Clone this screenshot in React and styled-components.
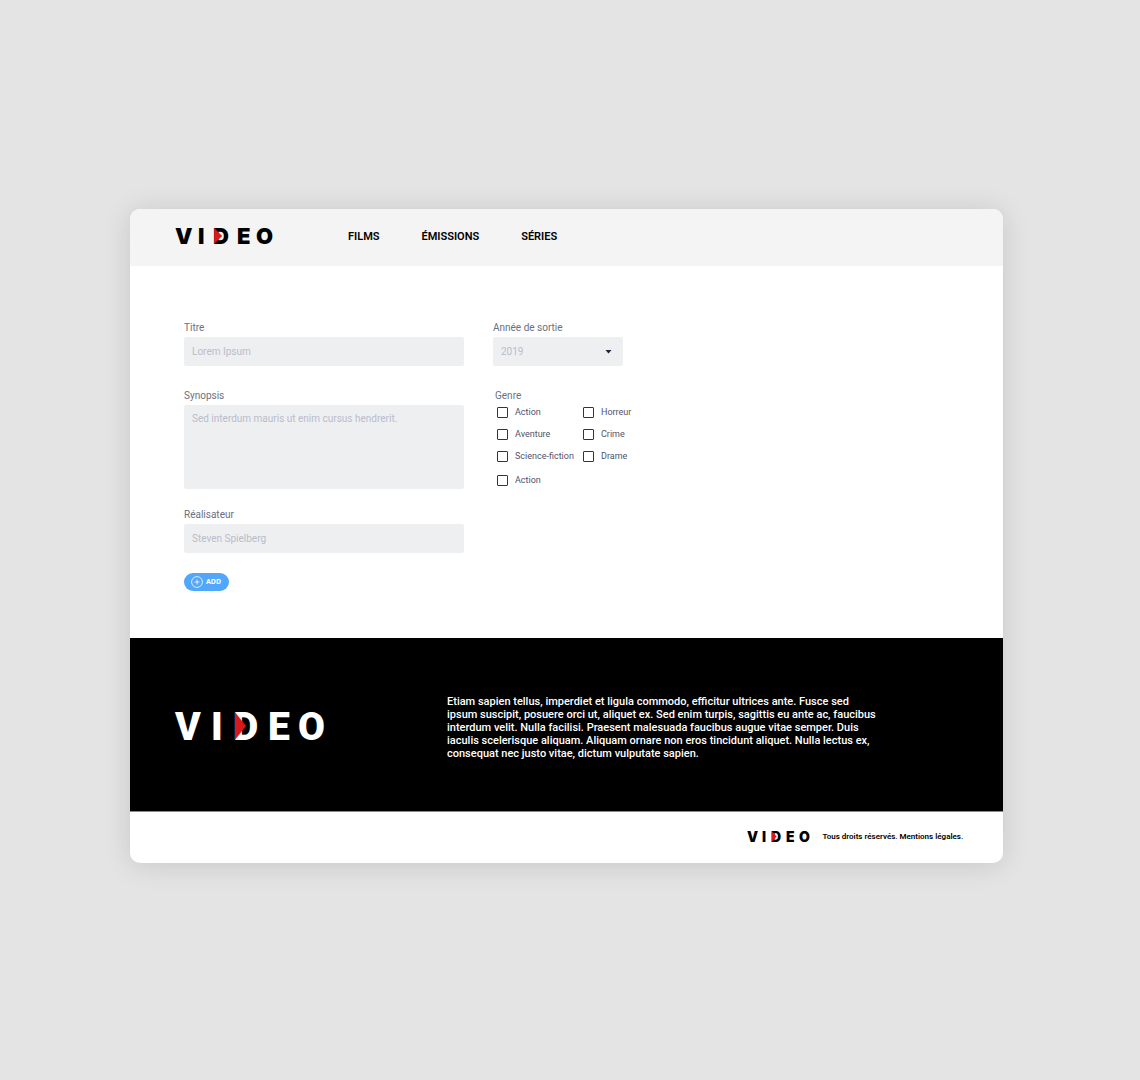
import React from "react";
import styled, { createGlobalStyle } from "styled-components";

const Global = createGlobalStyle`
  *, *::before, *::after { box-sizing: border-box; }
  body {
    margin: 0;
    background: #e4e4e4;
    font-family: Roboto, "Liberation Sans", sans-serif;
    color: #000;
  }
`;

const Page = styled.div`
  display: grid;
  align-items: center;
  min-height: 100vh;
  padding: 209px 12% 217px 130px;
`;

const Window = styled.div`
  min-width: 0;
  background: #fff;
  border-radius: 10px;
  overflow: hidden;
  box-shadow: 0 2px 28px rgba(0, 0, 0, 0.13);
`;

const Header = styled.header`
  display: flex;
  align-items: center;
  gap: 74px;
  min-height: 57px;
  padding: 0 45px 3px;
  background: #f4f4f4;
`;

const Nav = styled.nav`
  display: flex;
  flex-wrap: wrap;
  gap: 42px;
  padding-top: 1px;
`;

const NavLink = styled.a`
  color: #000;
  font-size: 11px;
  font-weight: 600;
  line-height: 16px;
  text-decoration: none;
`;

const Form = styled.form`
  padding: 54px 54px 47px;
`;

const FormRow = styled.div`
  display: flex;
  flex-wrap: wrap;
  column-gap: 29px;
  margin-bottom: ${(p) => p.$space}px;
`;

const Field = styled.div`
  display: flex;
  flex-direction: column;
  gap: 1px;
  flex: 0 1 ${(p) => p.$width}px;
`;

const Label = styled.label`
  color: #6b6f80;
  font-size: 10px;
  line-height: 16px;
`;

const control = `
  width: 100%;
  margin: 0;
  border: 0;
  border-radius: 2px;
  background: #eeeff1;
  color: #b9bccb;
  font-family: inherit;
  font-size: 10px;
  line-height: 15px;
  &::placeholder { color: #b9bccb; opacity: 1; }
`;

const TextInput = styled.input`
  ${control}
  height: 29px;
  padding: 0 8px;
`;

const TextArea = styled.textarea`
  ${control}
  display: block;
  height: 84px;
  padding: 6px 8px;
  resize: none;
`;

const SelectWrap = styled.div`
  position: relative;
`;

const Select = styled.select`
  ${control}
  display: block;
  height: 29px;
  padding: 0 8px;
  appearance: none;
`;

const Caret = styled.svg`
  position: absolute;
  top: 13px;
  right: 11px;
  pointer-events: none;
`;

const Genres = styled.fieldset`
  min-width: 0;
  margin: 0;
  padding: 0 0 0 2px;
  border: 0;
`;

const Legend = styled.legend`
  padding: 0;
  color: #6b6f80;
  font-size: 10px;
  line-height: 16px;
`;

const GenreGrid = styled.div`
  display: grid;
  grid-template-columns: 86px auto;
  grid-template-rows: repeat(3, 22px) 26px;
  align-items: center;
  padding: 0 2px;
  margin-top: -3px;
`;

const Choice = styled.label`
  display: flex;
  align-items: center;
  gap: 7px;
  color: #50546a;
  font-size: 9px;
  line-height: 12px;
  white-space: nowrap;
`;

const Checkbox = styled.input`
  appearance: none;
  flex: none;
  width: 11px;
  height: 11px;
  margin: 0;
  border: 1px solid #2d3350;
  border-radius: 1px;
  background: #fff;
  &:checked { background: #2d3350; }
`;

const AddButton = styled.button`
  display: flex;
  align-items: center;
  gap: 3px;
  height: 18px;
  padding: 0 8px 0 7px;
  border: 0;
  border-radius: 9px;
  background: #51a7f9;
  color: #fff;
  font-family: "Noto Sans", sans-serif;
  font-size: 7px;
  font-weight: 700;
  line-height: 12px;
`;

const Banner = styled.section`
  display: flex;
  align-items: center;
  gap: 122px;
  min-height: 173px;
  padding: 2px 45px 0;
  background: #000;
  color: #fff;
`;

const BannerText = styled.p`
  flex: 0 1 430px;
  margin: 4px 0 0;
  font-size: 11px;
  font-weight: 500;
  line-height: 13px;
`;

const Footer = styled.footer`
  display: flex;
  align-items: center;
  justify-content: flex-end;
  gap: 12px;
  min-height: 52px;
  padding: 0 40px 2px;
  border-top: 1px solid #8a8a8a;
`;

const Legal = styled.a`
  color: #000;
  font-size: 8px;
  font-weight: 600;
  line-height: 12px;
  text-decoration: none;
`;

const LogoSvg = styled.svg`
  display: block;
  flex: none;
  overflow: visible;
`;

const Wordmark = styled.text`
  font-family: ${(p) => (p.$wide ? "Inter" : "Roboto")}, "Liberation Sans", sans-serif;
  font-weight: 900;
`;

function Logo({ width, height, size, xs, tip, color, wide }) {
  const left = xs[2] + size * 0.05;
  return (
    <LogoSvg width={width} height={height} role="img" aria-label="Video">
      <Wordmark $wide={wide} x={xs.join(" ")} y={height} fill={color} fontSize={size}>
        VIDEO
      </Wordmark>
      <path
        d={`M${left} 0 L${left + tip} ${height / 2} L${left} ${height} Z`}
        fill="#d7191c"
      />
    </LogoSvg>
  );
}

const genres = ["Action", "Horreur", "Aventure", "Crime", "Science-fiction", "Drame", "Action"];

export default function App() {
  return (
    <>
      <Global />
      <Page>
        <Window>
          <Header>
            <Logo wide width={99} height={16} size={22} xs={[0, 23, 38, 62, 81]} tip={8} color="#000" />
            <Nav>
              <NavLink href="#films">FILMS</NavLink>
              <NavLink href="#emissions">ÉMISSIONS</NavLink>
              <NavLink href="#series">SÉRIES</NavLink>
            </Nav>
          </Header>
          <Form>
            <FormRow $space={22}>
              <Field $width={280}>
                <Label htmlFor="titre">Titre</Label>
                <TextInput id="titre" placeholder="Lorem Ipsum" />
              </Field>
              <Field $width={130}>
                <Label htmlFor="annee">Année de sortie</Label>
                <SelectWrap>
                  <Select id="annee" defaultValue="2019">
                    <option>2019</option>
                  </Select>
                  <Caret width="7" height="4" viewBox="0 0 7 4">
                    <path d="M0.5 0h6L3.5 3.5z" fill="#1f2440" />
                  </Caret>
                </SelectWrap>
              </Field>
            </FormRow>
            <FormRow $space={14}>
              <Field $width={280}>
                <Label htmlFor="synopsis">Synopsis</Label>
                <TextArea id="synopsis" placeholder="Sed interdum mauris ut enim cursus hendrerit." />
              </Field>
              <Genres>
                <Legend>Genre</Legend>
                <GenreGrid>
                  {genres.map((g, i) => (
                    <Choice key={i}>
                      <Checkbox type="checkbox" />
                      {g}
                    </Choice>
                  ))}
                </GenreGrid>
              </Genres>
            </FormRow>
            <FormRow $space={20}>
              <Field $width={280}>
                <Label htmlFor="realisateur">Réalisateur</Label>
                <TextInput id="realisateur" placeholder="Steven Spielberg" />
              </Field>
            </FormRow>
            <AddButton type="button">
              <svg width="12" height="12" viewBox="0 0 12 12" fill="none" stroke="#fff">
                <circle cx="6" cy="6" r="5.4" strokeWidth="0.8" />
                <path d="M6 3.5v5M3.5 6h5" strokeWidth="0.8" />
              </svg>
              ADD
            </AddButton>
          </Form>
          <Banner>
            <Logo width={150} height={28} size={39} xs={[0, 36, 58, 93, 123]} tip={11} color="#fff" />
            <BannerText>
              Etiam sapien tellus, imperdiet et ligula commodo, efficitur ultrices ante. Fusce sed
              ipsum suscipit, posuere orci ut, aliquet ex. Sed enim turpis, sagittis eu ante ac,
              faucibus interdum velit. Nulla facilisi. Praesent malesuada faucibus augue vitae
              semper. Duis iaculis scelerisque aliquam. Aliquam ornare non eros tincidunt aliquet.
              Nulla lectus ex, consequat nec justo vitae, dictum vulputate sapien.
            </BannerText>
          </Banner>
          <Footer>
            <Logo wide width={63} height={11} size={14} xs={[0, 15, 24, 39, 52]} tip={5} color="#000" />
            <Legal href="#mentions">Tous droits réservés. Mentions légales.</Legal>
          </Footer>
        </Window>
      </Page>
    </>
  );
}
